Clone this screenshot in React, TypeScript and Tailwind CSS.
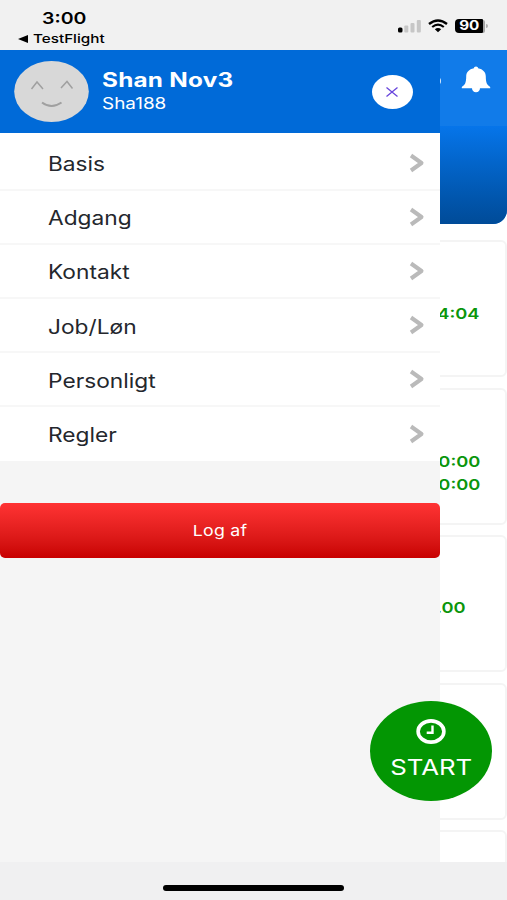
import React from "react";

const menu = ["Basis", "Adgang", "Kontakt", "Job/Løn", "Personligt", "Regler"];

function StatusBar() {
  return (
    <div className="flex h-[50px] shrink-0 justify-between bg-[#f1f1f1] text-black">
      <div className="flex flex-col pl-[18px] pt-[8px]">
        <div className="ml-[24px] h-[20px] origin-left scale-x-[1.22] self-start text-[16px] font-semibold leading-[21px]">3:00</div>
        <div className="flex h-[21px] items-center gap-[5px]">
          <svg width="10" height="8" viewBox="0 0 10 8"><path d="M0 4 10 0v8z" /></svg>
          <span className="origin-left scale-x-[1.24] text-[12.300px] font-medium leading-[20px]">TestFlight</span>
        </div>
      </div>
      <div className="flex items-start pr-[19px] pt-[19px]">
        <svg width="25" height="14" viewBox="0 0 25 14">
          <rect x="0" y="8.5" width="4.5" height="5" rx="1.500" />
          <rect x="6.300" y="6.5" width="4" height="7" rx="1" fill="#c6c6c6" />
          <rect x="12.500" y="4" width="4" height="9.5" rx="1" fill="#c6c6c6" />
          <rect x="18.800" y="1" width="4" height="12.5" rx="1" fill="#c6c6c6" />
        </svg>
        <svg className="ml-[5px]" width="20" height="14" viewBox="0 0 20 14" fill="none" stroke="#000">
          <path d="M1 5Q10-2.2 19 5" strokeWidth="2.4" />
          <path d="M4.2 8Q10 3.2 15.8 8" strokeWidth="2.2" />
          <path d="M6.8 10.2Q10 7.8 13.2 10.2L10 13.2Z" fill="#000" stroke="none" />
        </svg>
        <div className="ml-[7px] flex items-center">
          <div className="flex h-[14px] w-[28px] items-center justify-center rounded-l-[4px] rounded-r-[1px] bg-black">
            <span className="scale-x-[1.22] text-[12.500px] font-bold leading-[14px] text-white">90</span>
          </div>
          <div className="h-[13px] w-[2px] rounded-r-[3px] bg-[#a5a5a5]" />
          <div className="ml-px h-[4px] w-[2px] rounded-r-full bg-[#b0b0b0]" />
        </div>
      </div>
    </div>
  );
}

function Card({ lines, className }: { lines: string[]; className: string }) {
  return (
    <div className={`mb-[10.500px] flex h-[137px] shrink-0 flex-col items-end rounded-[6px] border-2 border-[#f4f4f4] bg-white pr-[25px] text-[15px] font-semibold leading-[23px] text-[#0b960b] ${className}`}>
      {lines.map((line, i) => (
        <span key={i} className="origin-right scale-x-[1.22]">{line}</span>
      ))}
    </div>
  );
}

function Dashboard() {
  return (
    <div className="flex h-full flex-col overflow-hidden bg-white">
      <div className="flex h-[174px] shrink-0 flex-col overflow-hidden rounded-br-[14px] bg-[#117be9]">
        <div className="flex h-[76px] justify-end pr-[16px] pt-[16px]">
          <div className="mr-[20px] mt-[12px] h-[6px] w-[4px] rounded-full bg-[#cde3fb]" />
          <svg width="30" height="27" viewBox="0 0 30 27" fill="#fff">
            <path d="M15 0.5c1.2 0 2 .7 2.1 1.8 4.9 1 7.700 4 7.700 8.3 0 5.9 1 8.3 4.400 10.4v1.3H.8V21C4.200 18.900 5.200 16.500 5.200 10.600c0-4.300 2.800-7.300 7.700-8.300C13 1.200 13.800.5 15 .5z" />
            <path d="M11 22h8c0 2.700-1.500 4.200-4 4.200S11 24.700 11 22z" />
          </svg>
        </div>
        <div className="flex-1 bg-linear-to-b from-[#0675ea] to-[#004b98]" />
      </div>
      <div className="flex flex-col pt-[16px]">
        <Card lines={["04:04"]} className="pt-[60px]" />
        <Card lines={["00:00", "00:00"]} className="pt-[60px]" />
        <Card lines={["0.00"]} className="pr-[39px] pt-[59px]" />
        <Card lines={[]} className="" />
        <Card lines={[]} className="" />
      </div>
    </div>
  );
}

function Avatar() {
  return (
    <svg width="75" height="62" viewBox="0 0 75 62" fill="none" stroke="#a0a0a0" strokeWidth="1.500">
      <ellipse cx="37.500" cy="30.500" rx="37.300" ry="30.500" fill="#d8d8d8" stroke="none" />
      <path d="M17.500 28 23 21l6 7M47 27l6-6.500 5.500 7" />
      <path d="M28 41.500Q37.500 48.500 47.500 41.500" strokeWidth="2" />
    </svg>
  );
}

function Drawer() {
  return (
    <div className="absolute left-0 top-0 flex h-full w-[439.500px] flex-col bg-[#f5f5f5]">
      <div className="flex h-[82.500px] shrink-0 items-center bg-[#006ad8] pl-[14px] pr-[27px] pt-px text-white">
        <Avatar />
        <div className="ml-[13px] flex flex-1 flex-col items-start">
          <div className="origin-left scale-x-[1.245] text-[19.500px] font-bold leading-[23px] tracking-[0.2px]">Shan Nov3</div>
          <div className="origin-left scale-x-[1.22] text-[15.500px] leading-[23px]">Sha188</div>
        </div>
        <div className="flex h-[34px] w-[41px] items-center justify-center rounded-[50%] bg-white">
          <svg width="12" height="10" viewBox="0 0 12 10" stroke="#6846dc" strokeWidth="1.300"><path d="M.5.500l11 9M11.500.500l-11 9" /></svg>
        </div>
      </div>
      <div className="flex h-[328px] shrink-0 flex-col bg-white pt-[4px]">
        {menu.map((item) => (
          <div key={item} className="flex h-[54.200px] shrink-0 items-center justify-between border-b-2 border-[#f7f7f7] pl-[48px] pr-[15px] last:border-transparent">
            <span className="mt-[3px] origin-left scale-x-[1.165] text-[19.500px] leading-[24px] text-[#24272d]">{item}</span>
            <svg width="16" height="20" viewBox="0 0 16 20" fill="none" stroke="#bababa" strokeWidth="4" strokeLinejoin="round"><path d="M2 2.500l10.500 7.500-10.500 7.500" /></svg>
          </div>
        ))}
      </div>
      <button className="mt-[42px] flex h-[55px] shrink-0 items-center justify-center rounded-[5px] bg-linear-to-b from-[#ff3333] to-[#c80000] text-white">
        <span className="mt-px scale-x-[1.18] text-[15px] leading-[20px] tracking-[0.2px]">Log af</span>
      </button>
    </div>
  );
}

function StartButton() {
  return (
    <button className="absolute left-[370px] top-[650.500px] flex h-[100px] w-[122px] flex-col items-center rounded-[50%] bg-[#039603] pt-[18px] text-white">
      <svg width="30" height="25" viewBox="0 0 30 25" fill="none" stroke="#fff">
        <ellipse cx="15" cy="12.500" rx="12.900" ry="10.600" strokeWidth="3.600" />
        <path d="M16.500 6.500v7.300h-5.800" strokeWidth="2.400" />
      </svg>
      <span className="mt-[10px] scale-x-[1.200] text-[21.500px] leading-[26px]">START</span>
    </button>
  );
}

export default function App() {
  return (
    <div className="flex h-[900px] w-[507px] flex-col overflow-hidden font-['Inter','Liberation_Sans',sans-serif]">
      <StatusBar />
      <main className="relative h-[812px] shrink-0">
        <Dashboard />
        <Drawer />
        <StartButton />
      </main>
      <footer className="flex flex-1 justify-center bg-[#f0f0f1] pt-[23px]">
        <div className="h-[6px] w-[181px] rounded-full bg-black" />
      </footer>
    </div>
  );
}
